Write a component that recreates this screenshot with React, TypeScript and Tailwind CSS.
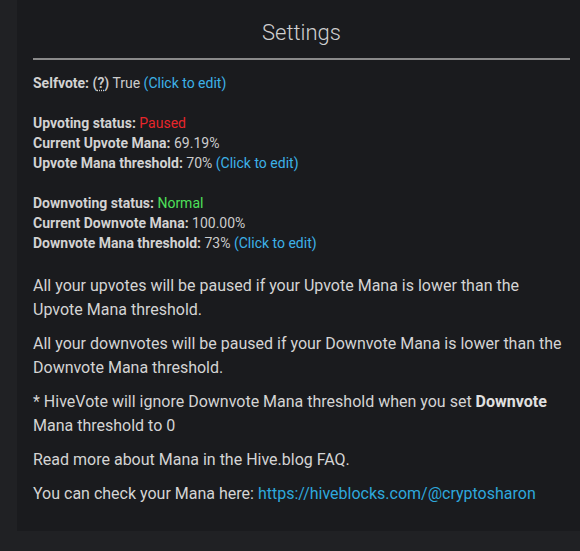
const label = 'font-bold text-[#d2d2d2]';
const edit = 'text-[#3db2e8] cursor-pointer';

export default function App() {
  return (
    <div className="min-h-[551px] bg-[#202124] pb-[23px] font-['Roboto',sans-serif] text-[#d4d4d4]">
      <div className="ml-[17px] bg-[#1a1b1e] pl-4 pr-[10px] pt-[20px] pb-[25px]">
        <h2 className="text-center text-[22px] font-light leading-[26px] text-[#cfcfcf]">Settings</h2>
        <hr className="mt-[12px] border-t-2 border-[#8a8a8a]" />

        <div className="mt-[13px] text-sm leading-5 text-[#cccccc]">
          <div>
            <span className={label}>Selfvote: </span>
            <span className="font-semibold">
              (<span className="underline decoration-dotted underline-offset-2">?</span>)
            </span>{' '}
            True <span className={edit}>(Click to edit)</span>
          </div>
          <br />
          <div>
            <span className={label}>Upvoting status: </span>
            <span className="text-[#e8262b]">Paused</span>
          </div>
          <div>
            <span className={label}>Current Upvote Mana: </span>69.19%
          </div>
          <div>
            <span className={label}>Upvote Mana threshold: </span>70% <span className={edit}>(Click to edit)</span>
          </div>
          <br />
          <div>
            <span className={label}>Downvoting status: </span>
            <span className="text-[#4ee05a]">Normal</span>
          </div>
          <div>
            <span className={label}>Current Downvote Mana: </span>100.00%
          </div>
          <div>
            <span className={label}>Downvote Mana threshold: </span>73% <span className={edit}>(Click to edit)</span>
          </div>
        </div>

        <div className="mt-[21px] text-base leading-6">
          <p className="mb-[10px]">
            All your upvotes will be paused if your Upvote Mana is lower than the Upvote Mana threshold.
          </p>
          <p className="mb-[10px]">
            All your downvotes will be paused if your Downvote Mana is lower than the Downvote Mana threshold.
          </p>
          <p className="mb-[10px]">
            * HiveVote will ignore Downvote Mana threshold when you set <b className="text-[#e0e0e0]">Downvote</b> Mana
            threshold to 0
          </p>
          <p className="mb-[10px]">Read more about Mana in the Hive.blog FAQ.</p>
          <p>
            You can check your Mana here:{' '}
            <a className="text-[#2ea8dc]">https://hiveblocks.com/@cryptosharon</a>
          </p>
        </div>
      </div>
    </div>
  );
}
